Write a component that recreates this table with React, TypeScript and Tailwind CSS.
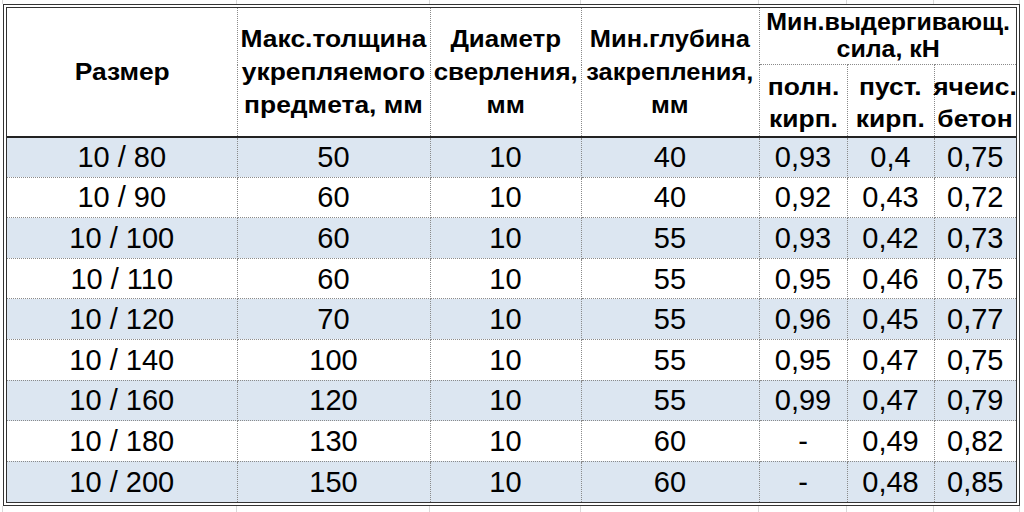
import React from 'react'

const ROWS: string[][] = [
  ['10 / 80', '50', '10', '40', '0,93', '0,4', '0,75'],
  ['10 / 90', '60', '10', '40', '0,92', '0,43', '0,72'],
  ['10 / 100', '60', '10', '55', '0,93', '0,42', '0,73'],
  ['10 / 110', '60', '10', '55', '0,95', '0,46', '0,75'],
  ['10 / 120', '70', '10', '55', '0,96', '0,45', '0,77'],
  ['10 / 140', '100', '10', '55', '0,95', '0,47', '0,75'],
  ['10 / 160', '120', '10', '55', '0,99', '0,47', '0,79'],
  ['10 / 180', '130', '10', '60', '-', '0,49', '0,82'],
  ['10 / 200', '150', '10', '60', '-', '0,48', '0,85'],
]

// column widths inside the double frame, px
const COLS = [230, 193, 151, 178, 88, 87, 82]
// spreadsheet grid spacing outside the table
const GRID = [3, 234, 193, 151, 178, 88, 87, 86]

const cell = 'border border-dotted border-[#8a8a8a] text-center align-middle p-0'
const headBottom = 'border-b-2 [border-bottom-style:solid] border-b-[#222]'
const head = 'inline-block scale-x-[1.1] text-[24px] font-bold'

function GridStrip({ h }: { h: string }) {
  return (
    <div className={`flex ${h}`}>
      {GRID.map((w, i) => (
        <div key={i} className="shrink-0 border-r border-[#d9d9d9]" style={{ width: w }} />
      ))}
    </div>
  )
}

function Head({ lines, lh, w = 'scale-x-[1.1]' }: { lines: string[]; lh: string; w?: string }) {
  return (
    <span className={`${head} ${lh} ${w}`}>
      {lines.map((l, i) => (
        <React.Fragment key={i}>
          {i > 0 && <br />}
          {l}
        </React.Fragment>
      ))}
    </span>
  )
}

export default function App() {
  return (
    <div className="w-[1024px] h-[512px] bg-white overflow-hidden font-['Liberation_Sans',Arial,sans-serif] text-black">
      <GridStrip h="h-[4px]" />
      <div className="ml-[3px] w-fit border border-[#333] p-[2px]">
        <div className="border border-[#333]">
          <table className="border-collapse border-hidden table-fixed">
            <colgroup>
              {COLS.map((w, i) => (
                <col key={i} style={{ width: w }} />
              ))}
            </colgroup>
            <thead>
              <tr className="h-[56px]">
                <th rowSpan={2} className={`${cell} ${headBottom}`}>
                  <Head lines={['Размер']} lh="leading-[33px]" />
                </th>
                <th rowSpan={2} className={`${cell} ${headBottom}`}>
                  <Head lines={['Макс.толщина', 'укрепляемого', 'предмета, мм']} lh="leading-[33px]" />
                </th>
                <th rowSpan={2} className={`${cell} ${headBottom}`}>
                  <Head lines={['Диаметр', 'сверления,', 'мм']} lh="leading-[33px]" w="scale-x-[1.08]" />
                </th>
                <th rowSpan={2} className={`${cell} ${headBottom}`}>
                  <Head lines={['Мин.глубина', 'закрепления,', 'мм']} lh="leading-[33px]" w="scale-x-[1.06]" />
                </th>
                <th colSpan={3} className={cell}>
                  <Head lines={['Мин.выдергивающ.', 'сила, кН']} lh="leading-[27px]" w="scale-x-[1.04]" />
                </th>
              </tr>
              <tr className="h-[72px]">
                {[['полн.', 'кирп.'], ['пуст.', 'кирп.'], ['ячеис.', 'бетон']].map(t => (
                  <th key={t[0]} className={`${cell} ${headBottom} pt-[6px]`}>
                    <Head lines={t} lh="leading-[32px]" />
                  </th>
                ))}
              </tr>
            </thead>
            <tbody>
              {ROWS.map((r, i) => (
                <tr key={i} className={`h-[40.6px] ${i % 2 === 0 ? 'bg-[#dce6f1]' : 'bg-white'}`}>
                  {r.map((v, j) => (
                    <td key={j} className={`${cell} text-[29px] leading-[36px]`}>
                      {v}
                    </td>
                  ))}
                </tr>
              ))}
            </tbody>
          </table>
        </div>
      </div>
      <GridStrip h="h-[20px]" />
    </div>
  )
}
